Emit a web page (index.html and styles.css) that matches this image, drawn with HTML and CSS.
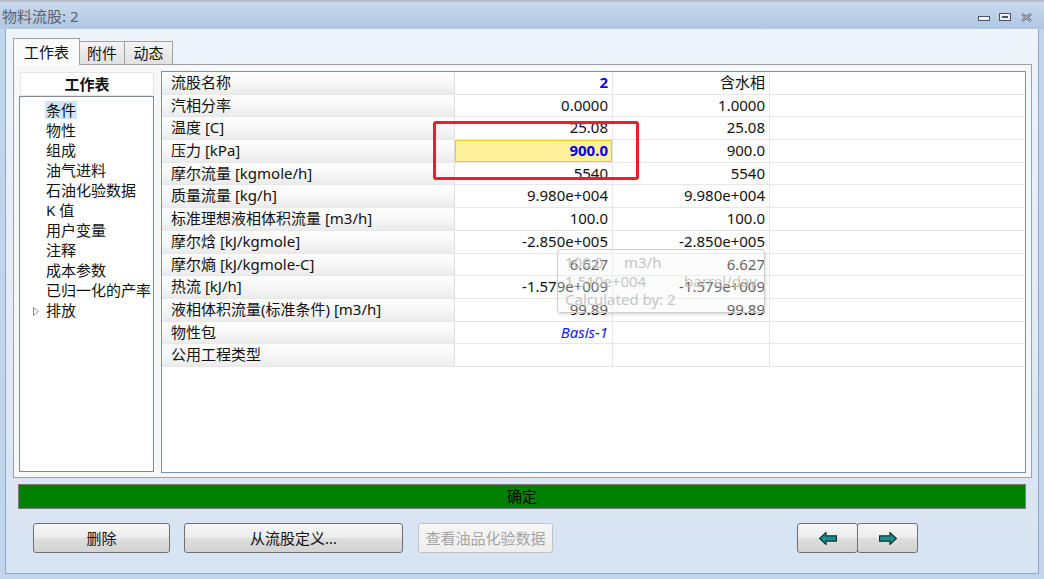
FILE: index.html
```html
<!DOCTYPE html>
<html lang="zh">
<head>
<meta charset="utf-8">
<title>物料流股: 2</title>
<link rel="stylesheet" href="styles.css">
</head>
<body>
<div class="titlebar">
  <span class="title">物料流股: 2</span>
  <div class="controls">
    <svg class="ic-min" width="12" height="6" viewBox="0 0 12 6"><rect x="0.5" y="0.5" width="11" height="4" fill="#eef2f8" stroke="#48536a"/></svg>
    <svg class="ic-max" width="12" height="8" viewBox="0 0 12 8"><rect x="0.5" y="0.5" width="11" height="7" fill="#eef2f8" stroke="#48536a"/><rect x="3" y="3" width="6" height="2" fill="#48536a"/></svg>
    <svg class="ic-close" width="11" height="9" viewBox="0 0 11 9"><path d="M1 1 L10 8 M10 1 L1 8" stroke="#5b6477" stroke-width="2.4"/><path d="M1 1 L10 8 M10 1 L1 8" stroke="#e9eef5" stroke-width="0.8"/></svg>
  </div>
</div>
<div class="client">
  <div class="tabs">
    <div class="tab active t1">工作表</div>
    <div class="tab t2">附件</div>
    <div class="tab t3">动态</div>
  </div>
  <div class="panel">
    <div class="nav">
      <div class="nav-head">工作表</div>
      <ul class="nav-list">
        <li><span class="sel">条件</span></li>
        <li>物性</li>
        <li>组成</li>
        <li>油气进料</li>
        <li>石油化验数据</li>
        <li>K 值</li>
        <li>用户变量</li>
        <li>注释</li>
        <li>成本参数</li>
        <li>已归一化的产率</li>
        <li><span class="exp"><svg width="6" height="9" viewBox="0 0 6 9"><path d="M0.5 0.5 L5.5 4.5 L0.5 8.5 Z" fill="#fff" stroke="#8e8e8e"/></svg></span>排放</li>
      </ul>
    </div>
    <div class="grid-wrap">
      <div class="grid">
        <div class="c lbl">流股名称</div><div class="c v strong">2</div><div class="c v">含水相</div><div class="c e"></div>
        <div class="c lbl">汽相分率</div><div class="c v">0.0000</div><div class="c v">1.0000</div><div class="c e"></div>
        <div class="c lbl">温度 [C]</div><div class="c v">25.08</div><div class="c v">25.08</div><div class="c e"></div>
        <div class="c lbl">压力 [kPa]</div><div class="c v strong hl">900.0</div><div class="c v">900.0</div><div class="c e"></div>
        <div class="c lbl">摩尔流量 [kgmole/h]</div><div class="c v">5540</div><div class="c v">5540</div><div class="c e"></div>
        <div class="c lbl">质量流量 [kg/h]</div><div class="c v">9.980e+004</div><div class="c v">9.980e+004</div><div class="c e"></div>
        <div class="c lbl">标准理想液相体积流量 [m3/h]</div><div class="c v">100.0</div><div class="c v">100.0</div><div class="c e"></div>
        <div class="c lbl">摩尔焓 [kJ/kgmole]</div><div class="c v">-2.850e+005</div><div class="c v">-2.850e+005</div><div class="c e"></div>
        <div class="c lbl">摩尔熵 [kJ/kgmole-C]</div><div class="c v">6.627</div><div class="c v">6.627</div><div class="c e"></div>
        <div class="c lbl">热流 [kJ/h]</div><div class="c v">-1.579e+009</div><div class="c v">-1.579e+009</div><div class="c e"></div>
        <div class="c lbl">液相体积流量(标准条件) [m3/h]</div><div class="c v">99.89</div><div class="c v">99.89</div><div class="c e"></div>
        <div class="c lbl">物性包</div><div class="c v link">Basis-1</div><div class="c v"></div><div class="c e"></div>
        <div class="c lbl">公用工程类型</div><div class="c v"></div><div class="c v"></div><div class="c e"></div>
      </div>
      <div class="tooltip">
        <div class="tl"><span class="k1">100.0</span><span>m3/h</span></div>
        <div class="tl"><span class="k2">1.510e+004</span><span>barrel/day</span></div>
        <div class="tl">Calculated by: 2</div>
      </div>
      <div class="callout"></div>
    </div>
  </div>
  <div class="status">确定</div>
  <div class="buttons">
    <button class="btn b-del">删除</button>
    <button class="btn b-def">从流股定义...</button>
    <button class="btn b-view" disabled>查看油品化验数据</button>
    <button class="btn b-prev"><svg width="18" height="13" viewBox="0 0 18 13"><polygon points="0.7,6.5 7,0.6 7,3.8 17.4,3.8 17.4,9.2 7,9.2 7,12.4" fill="#218c8c" stroke="#143232" stroke-width="1.2"/></svg></button>
    <button class="btn b-next"><svg width="18" height="13" viewBox="0 0 18 13"><polygon points="17.3,6.5 11,0.6 11,3.8 0.6,3.8 0.6,9.2 11,9.2 11,12.4" fill="#218c8c" stroke="#143232" stroke-width="1.2"/></svg></button>
  </div>
</div>
</body>
</html>
```
FILE: styles.css
```css
* { box-sizing: border-box; }
html, body { margin: 0; padding: 0; }
body {
  width: 1044px;
  height: 579px;
  overflow: hidden;
  background: #c3d5eb;
  font-family: "Noto Sans", "Noto Sans CJK SC", sans-serif;
  font-size: 15px;
  color: #111;
}

/* title bar */
.titlebar {
  height: 29px;
  display: flex;
  align-items: center;
  padding-left: 2px;
  border-top: 2px solid #b7bec9;
  background: linear-gradient(#c9d9ee, #afc5e1);
}
.title { color: #5a6272; line-height: 20px; }
.controls { margin-left: auto; margin-right: 12px; display: flex; align-items: center; }
.ic-min { margin-top: 6px; }
.ic-max { margin-left: 9px; margin-top: 2px; }
.ic-close { margin-left: 10px; margin-top: 3px; }

/* client */
.client {
  height: 545px;
  margin: 0 5px;
  border: 1px solid #90a8c8;
  border-top: none;
  background: linear-gradient(#eef4fb, #e3ecf7 45%, #d6e3f2);
  padding: 9px 6px 0 7px;
}

.tabs { display: flex; align-items: flex-end; height: 26px; }
.tab {
  height: 23px;
  border: 1px solid #a2a2a2;
  border-bottom: none;
  background: linear-gradient(#f4f4f4, #e1e1e1);
  text-align: center;
  line-height: 22px;
  margin-left: -1px;
}
.tab.active {
  height: 27px;
  margin-bottom: -1px;
  margin-left: 0;
  background: #fafafa;
  line-height: 26px;
  position: relative;
  z-index: 1;
}
.t1 { width: 67px; }
.t2 { width: 46px; }
.t3 { width: 49px; }

.panel {
  height: 414px;
  border: 1px solid #a0a0a0;
  background: #f7f7f7;
  padding: 6px 5px 4px 5px;
  display: flex;
  gap: 7px;
}

/* navigation */
.nav { width: 135px; display: flex; flex-direction: column; }
.nav-head {
  margin: 1px 0 0 1px;
  width: 134px;
  height: 24px;
  background: #fff;
  border: 1px solid #e4e4e4;
  font-weight: bold;
  text-align: center;
  line-height: 22px;
}
.nav-list {
  flex: 1;
  margin: 0 0 1px 0;
  border: 1px solid #858b95;
  background: #fff;
  list-style: none;
  padding: 3px 0 0 26px;
}
.nav-list li { line-height: 20px; height: 20px; white-space: nowrap; }
.sel {
  display: inline-block;
  background: #cde6fb;
  line-height: 18px;
  padding: 0 1px;
  margin-left: -1px;
  vertical-align: top;
  margin-top: 1px;
}
.exp { display: inline-block; width: 6px; margin-left: -13px; margin-right: 7px; }
.exp svg { display: block; margin-top: 1px; }

/* property grid */
.grid-wrap {
  flex: 1;
  position: relative;
  border: 1px solid #7294bb;
  background: #fff;
}
.grid {
  display: grid;
  grid-template-columns: 293px 158px 157px 1fr;
  grid-auto-rows: 22.7px;
}
.c {
  border-right: 1px solid #e6e6e6;
  border-bottom: 1px solid #e8e8e8;
  line-height: 21px;
  white-space: nowrap;
  overflow: hidden;
}
.lbl {
  padding-left: 9px;
  background: linear-gradient(#fefefe 0%, #f8f8f8 45%, #ebebeb 100%);
  border-right-color: #dedede;
}
.v { text-align: right; padding-right: 4px; color: #111; }
.strong { font-weight: bold; color: #0000f0; }
.hl { background: #fff09c; box-shadow: inset 0 0 0 1px #f1c91e; }
.link { font-style: italic; color: #1a1aff; }
.e { border-right: none; }

.tooltip {
  position: absolute;
  left: 395px;
  top: 177px;
  width: 208px;
  height: 64px;
  border: 1px solid #cfcfcf;
  border-radius: 3px;
  background: rgba(246, 246, 246, 0.35);
  box-shadow: 1px 2px 3px rgba(0, 0, 0, 0.12);
  color: #c4c4c4;
  padding: 3px 0 0 7px;
  line-height: 18.5px;
}
.tl { display: flex; white-space: nowrap; }
.k1 { width: 59px; }
.k2 { width: 119px; }

.callout {
  position: absolute;
  left: 271px;
  top: 49px;
  width: 206px;
  height: 59px;
  border: 3px solid #e8202b;
  border-radius: 3px;
}

/* status bar */
.status {
  margin: 6px 6px 0 5px;
  height: 25px;
  background: #008000;
  border: 1px solid #7c7c7c;
  text-align: center;
  line-height: 23px;
  color: #000;
}

/* buttons */
.buttons { display: flex; margin-top: 14px; padding-left: 20px; }
.btn {
  height: 30px;
  padding: 0;
  border: 1px solid #707070;
  border-radius: 3px;
  background: linear-gradient(#f6f6f6 0%, #ececec 48%, #dedede 52%, #d2d2d2 100%);
  font-family: inherit;
  font-size: 15px;
  color: #111;
  line-height: 28px;
  text-align: center;
  display: flex;
  align-items: center;
  justify-content: center;
}
.b-del { width: 137px; }
.b-def { width: 219px; margin-left: 14px; }
.b-view {
  width: 135px;
  margin-left: 15px;
  color: #a4a4a4;
  border-color: #c3c3c3;
  background: linear-gradient(#f6f6f6, #eeeeee);
}
.b-prev { width: 61px; margin-left: 244px; }
.b-next { width: 61px; margin-left: -1px; }
```
